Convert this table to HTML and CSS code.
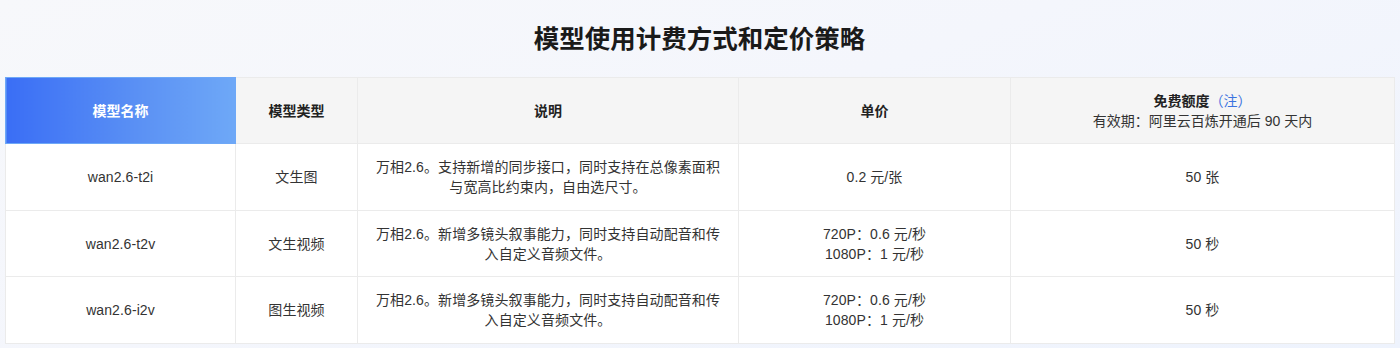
FILE: index.html
```html
<!DOCTYPE html>
<html lang="zh-CN">
<head>
<meta charset="utf-8">
<title>模型使用计费方式和定价策略</title>
<link rel="stylesheet" href="styles.css">
</head>
<body>
<div class="page">
  <h1 class="title">模型使用计费方式和定价策略</h1>
  <table class="price-table">
    <colgroup>
      <col class="c-name">
      <col class="c-type">
      <col class="c-desc">
      <col class="c-price">
      <col class="c-free">
    </colgroup>
    <thead>
      <tr>
        <th class="th-accent">模型名称</th>
        <th>模型类型</th>
        <th>说明</th>
        <th>单价</th>
        <th><div>免费额度<span class="note">（注）</span></div><div class="sub">有效期：阿里云百炼开通后 90 天内</div></th>
      </tr>
    </thead>
    <tbody>
      <tr>
        <td>wan2.6-t2i</td>
        <td>文生图</td>
        <td>万相2.6。支持新增的同步接口，同时支持在总像素面积<br>与宽高比约束内，自由选尺寸。</td>
        <td>0.2 元/张</td>
        <td>50 张</td>
      </tr>
      <tr>
        <td>wan2.6-t2v</td>
        <td>文生视频</td>
        <td>万相2.6。新增多镜头叙事能力，同时支持自动配音和传<br>入自定义音频文件。</td>
        <td>720P：0.6 元/秒<br>1080P：1 元/秒</td>
        <td>50 秒</td>
      </tr>
      <tr>
        <td>wan2.6-i2v</td>
        <td>图生视频</td>
        <td>万相2.6。新增多镜头叙事能力，同时支持自动配音和传<br>入自定义音频文件。</td>
        <td>720P：0.6 元/秒<br>1080P：1 元/秒</td>
        <td>50 秒</td>
      </tr>
    </tbody>
  </table>
</div>
</body>
</html>
```

FILE: styles.css
```css
html, body {
  margin: 0;
  padding: 0;
}
body {
  width: 1400px;
  height: 348px;
  overflow: hidden;
  font-family: "Liberation Sans", "Noto Sans CJK SC", sans-serif;
  color: #333;
  background: linear-gradient(160deg, #f7f8fb 0%, #f4f6fc 45%, #eef3fd 100%);
}
.page {
  padding: 0 6px 0 5px;
}
.title {
  margin: 0;
  height: 77px;
  box-sizing: border-box;
  padding-bottom: 4px;
  display: flex;
  align-items: center;
  justify-content: center;
  font-family: "Noto Sans CJK SC", sans-serif;
  font-size: 25.5px;
  line-height: 32px;
  font-weight: 700;
  color: #1a1a1a;
}
.price-table {
  width: 1389px;
  table-layout: fixed;
  border-collapse: collapse;
  background: #fff;
  font-size: 14px;
  line-height: 20px;
}
.c-name { width: 230px; }
.c-type { width: 122px; }
.c-desc { width: 381px; }
.c-price { width: 272px; }
.c-free { width: 384px; }
.price-table th,
.price-table td {
  border: 1px solid #ebebeb;
  text-align: center;
  vertical-align: middle;
  padding: 0 8px;
}
.price-table th {
  height: 65px;
  background: #f5f5f5;
  font-weight: 700;
  color: #222;
}
.price-table td {
  height: 65.7px;
  color: #333;
  letter-spacing: 0.1px;
}
.price-table th.th-accent {
  background: linear-gradient(90deg, #3a6ef5 0%, #5c92f4 60%, #6ea8f7 100%);
  color: #fff;
  border-color: #6ea8f7;
}
.note {
  color: #3b73e0;
  font-weight: 400;
}
.sub {
  font-weight: 400;
  color: #333;
}
```
